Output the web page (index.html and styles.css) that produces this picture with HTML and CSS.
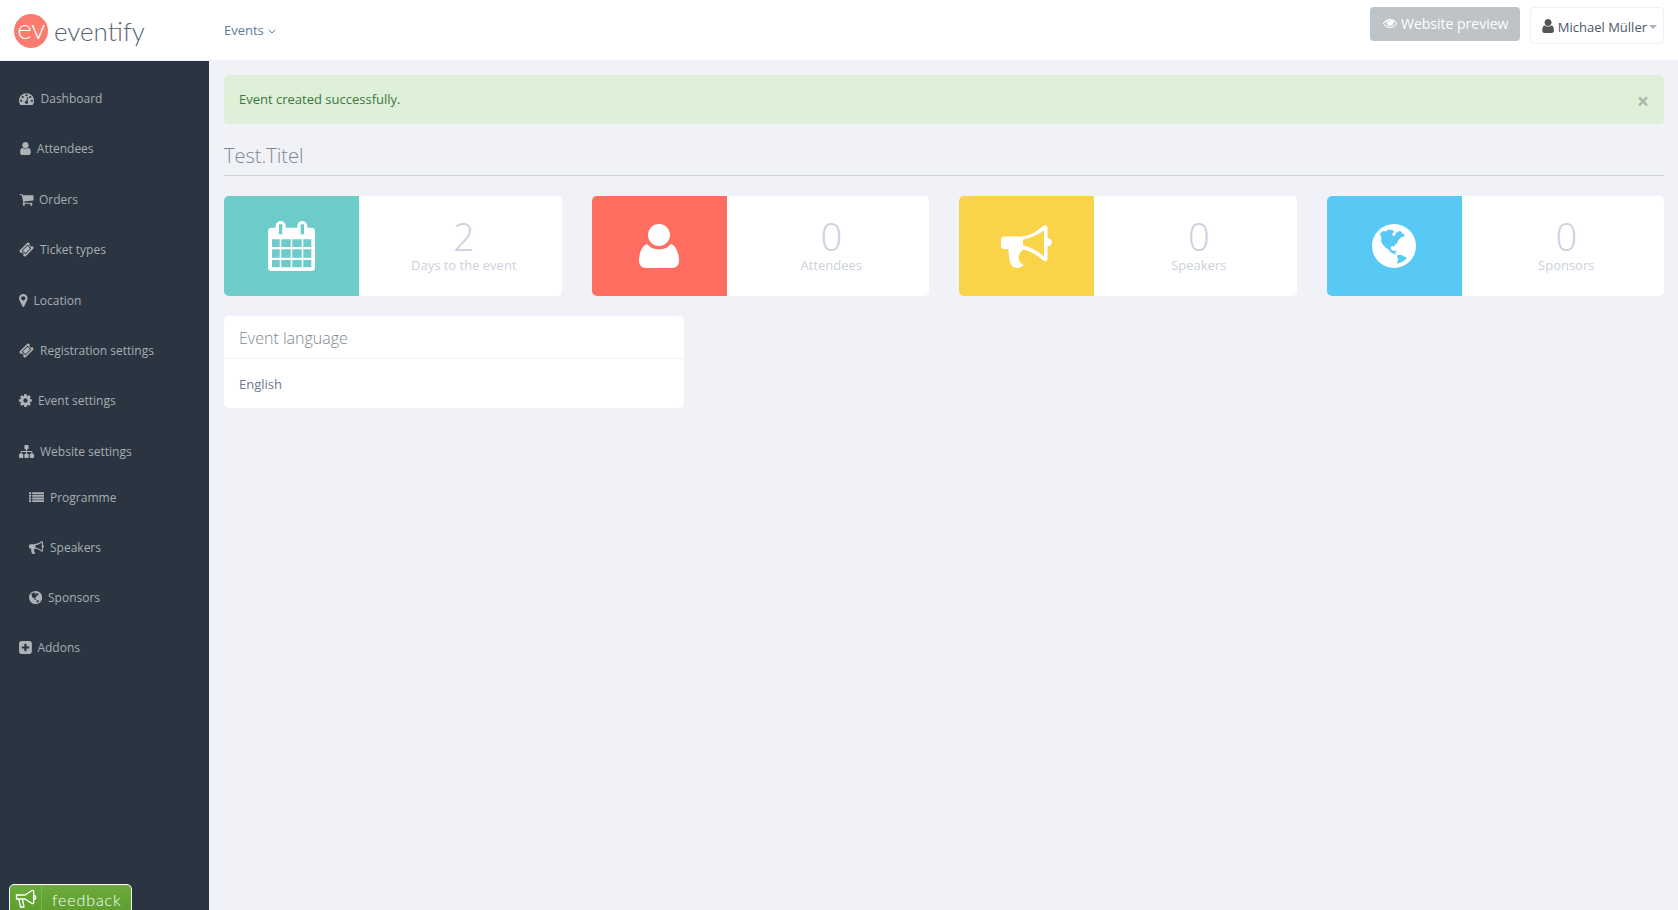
FILE: index.html
```html
<!DOCTYPE html>
<html>
<head>
    <meta charset="utf-8">
    <title>eventify</title>
    <link rel="stylesheet" href="styles.css">
</head>
<body>
<svg class="icon-defs" width="0" height="0">
    <defs>
        <path id="p-dashboard" d="M384 1152q0-53-37.5-90.5t-90.5-37.5-90.5 37.5-37.5 90.5 37.5 90.5 90.5 37.5 90.5-37.5 37.5-90.5zm192-448q0-53-37.5-90.5t-90.5-37.5-90.5 37.5-37.5 90.5 37.5 90.5 90.5 37.5 90.5-37.5 37.5-90.5zm428 481l101-382q6-26-7.5-48.5t-38.5-29.5-48 6.5-30 39.5l-101 382q-60 5-107 43.5t-63 98.5q-20 77 20 146t117 89 146-20 89-117q16-60-6-117t-72-91zm660-33q0-53-37.5-90.5t-90.5-37.5-90.5 37.5-37.5 90.5 37.5 90.5 90.5 37.5 90.5-37.5 37.5-90.5zm-640-640q0-53-37.5-90.5t-90.5-37.5-90.5 37.5-37.5 90.5 37.5 90.5 90.5 37.5 90.5-37.5 37.5-90.5zm448 192q0-53-37.5-90.5t-90.5-37.5-90.5 37.5-37.5 90.5 37.5 90.5 90.5 37.5 90.5-37.5 37.5-90.5zm320 448q0 261-141 483-19 29-54 29h-1402q-35 0-54-29-141-221-141-483 0-182 71-348t191-286 286-191 348-71 348 71 286 191 191 286 71 348z"/>
        <path id="p-user" d="M1536 1399q0 109-62.5 187t-150.5 78h-854q-88 0-150.5-78t-62.5-187q0-85 8.5-160.5t31.5-152 58.5-131 94-89 134.5-34.5q131 128 313 128t313-128q76 0 134.5 34.5t94 89 58.5 131 31.5 152 8.5 160.5zm-256-887q0 159-112.5 271.5t-271.5 112.5-271.5-112.5-112.5-271.5 112.5-271.5 271.5-112.5 271.5 112.5 112.5 271.5z"/>
        <path id="p-cart" d="M704 1536q0 52-38 90t-90 38-90-38-38-90 38-90 90-38 90 38 38 90zm896 0q0 52-38 90t-90 38-90-38-38-90 38-90 90-38 90 38 38 90zm128-1088v512q0 24-16.5 42.5t-40.5 21.5l-1044 122q13 60 13 70 0 16-24 64h920q26 0 45 19t19 45-19 45-45 19h-1024q-26 0-45-19t-19-45q0-11 8-31.5t16-36 21.5-40 15.5-29.5l-177-823h-204q-26 0-45-19t-19-45 19-45 45-19h256q16 0 28.5 6.5t19.5 15.5 13 24.5 8 26 5.5 29.5 4.5 26h1201q26 0 45 19t19 45z"/>
        <path id="p-ticket" d="M1024 452l316 316-572 572-316-316zm-211 979l618-618q19-19 19-45t-19-45l-362-362q-18-18-45-18t-45 18l-618 618q-19 19-19 45t19 45l362 362q18 18 45 18t45-18zm889-637l-907 908q-37 37-90.5 37t-90.5-37l-126-126q56-56 56-136t-56-136-136-56-136 56l-125-126q-37-37-37-90.5t37-90.5l907-906q37-37 90.5-37t90.5 37l125 125q-56 56-56 136t56 136 136 56 136-56l126 125q37 37 37 90.5t-37 90.5z"/>
        <path id="p-marker" d="M1152 640q0-106-75-181t-181-75-181 75-75 181 75 181 181 75 181-75 75-181zm256 0q0 109-33 179l-364 774q-16 33-47.5 52t-67.5 19-67.5-19-46.5-52l-365-774q-33-70-33-179 0-212 150-362t362-150 362 150 150 362z"/>
        <path id="p-cog" d="M1152 896q0-106-75-181t-181-75-181 75-75 181 75 181 181 75 181-75 75-181zm512-109v222q0 12-8 23t-20 13l-185 28q-19 54-39 91 35 50 107 138 10 12 10 25t-9 23q-27 37-99 108t-94 71q-12 0-26-9l-138-108q-44 23-91 38-16 136-29 186-7 28-36 28h-222q-14 0-24.5-8.5t-11.5-21.5l-28-184q-49-16-90-37l-141 107q-10 9-25 9-14 0-25-11-126-114-165-168-7-10-7-23 0-12 8-23 15-21 51-66.5t54-70.5q-27-50-41-99l-183-27q-13-2-21-12.5t-8-23.5v-222q0-12 8-23t19-13l186-28q14-46 39-92-40-57-107-138-10-12-10-24 0-10 9-23 26-36 98.5-107.5t94.5-71.5q13 0 26 10l138 107q44-23 91-38 16-136 29-186 7-28 36-28h222q14 0 24.5 8.5t11.5 21.5l28 184q49 16 90 37l142-107q9-9 24-9 13 0 25 10 129 119 165 170 7 8 7 22 0 12-8 23-15 21-51 66.5t-54 70.5q26 50 41 98l183 28q13 2 21 12.5t8 23.5z"/>
        <path id="p-sitemap" d="M1792 1248v320q0 40-28 68t-68 28h-320q-40 0-68-28t-28-68v-320q0-40 28-68t68-28h96v-192h-512v192h96q40 0 68 28t28 68v320q0 40-28 68t-68 28h-320q-40 0-68-28t-28-68v-320q0-40 28-68t68-28h96v-192h-512v192h96q40 0 68 28t28 68v320q0 40-28 68t-68 28h-320q-40 0-68-28t-28-68v-320q0-40 28-68t68-28h96v-192q0-52 38-90t90-38h512v-192h-96q-40 0-68-28t-28-68v-320q0-40 28-68t68-28h320q40 0 68 28t28 68v320q0 40-28 68t-68 28h-96v192h512q52 0 90 38t38 90v192h96q40 0 68 28t28 68z"/>
        <path id="p-list" d="M0 256h256v224h-256zM384 256h1408v224h-1408zM0 576h256v224h-256zM384 576h1408v224h-1408zM0 896h256v224h-256zM384 896h1408v224h-1408zM0 1216h256v224h-256zM384 1216h1408v224h-1408z"/>
        <path id="p-bullhorn" d="M1664 640q53 0 90.5 37.5t37.5 90.5-37.5 90.5-90.5 37.5v384q0 52-38 90t-90 38q-417-347-812-380-58 19-91 66t-31 100.5 40 92.5q-20 33-23 65.5t6 58 33.5 55 48 50 61.5 50.5q-29 58-111.5 83t-168.5 11.5-132-55.5q-7-23-29.5-87.5t-32-94.5-23-89-15-101 3.5-98.5 22-110.5h-122q-66 0-113-47t-47-113v-192q0-66 47-113t113-47h480q435 0 896-384 52 0 90 38t38 90v384zm-128 604v-954q-394 302-768 343v270q377 42 768 341z"/>
        <path id="p-globe" fill-rule="evenodd" d="M22 0a22 22 0 1 0 0 44a22 22 0 1 0 0-44zM8 9.500l3-2.500 3 .5 2-2 4 .5 2 1-.5 2-1.500 1 1 2 2-.5 1-3 2-.5.5-1 3 .5.500 2 2 .5.500 2.500-3 .5-2 2-1.500 1.500-1 3-1.500.5-1.500 2.500-2-.5-1.500 1.500 1 2.500 2.500 1 2-.5.5 1.500-1.500.5 1 2-2-.5-3-1.500-2.500-3-3.500-2.500-2.500-3-1.500-3 .5-2.500zM25 31.300l4-.5 6 3.200-2.500 2.200-3 2-4.500 1.300.5-2.500 1-1.500-1.500-2.500z"/>
        <path id="p-plus" d="M1344 960v-128q0-26-19-45t-45-19h-256v-256q0-26-19-45t-45-19h-128q-26 0-45 19t-19 45v256h-256q-26 0-45 19t-19 45v128q0 26 19 45t45 19h256v256q0 26 19 45t45 19h128q26 0 45-19t19-45v-256h256q26 0 45-19t19-45zm320-544v960q0 119-84.5 203.5t-203.5 84.5h-960q-119 0-203.5-84.5t-84.5-203.5v-960q0-119 84.5-203.5t203.5-84.5h960q119 0 203.5 84.5t84.5 203.5z"/>
        <path id="p-eye" d="M1664 960q-152-236-381-353 61 104 61 225 0 185-131.5 316.5t-316.5 131.5-316.5-131.5-131.5-316.5q0-121 61-225-229 117-381 353 133 205 333.5 326.5t434.5 121.5 434.5-121.5 333.5-326.5zm-720-384q0-20-14-34t-34-14q-125 0-214.5 89.5t-89.5 214.5q0 20 14 34t34 14 34-14 14-34q0-86 61-147t147-61q20 0 34-14t14-34zm848 384q0 34-20 69-140 230-376.5 368.5t-499.5 138.5-499.5-139-376.5-368q-20-35-20-69t20-69q140-229 376.5-368t499.5-139 499.5 139 376.5 368q20 35 20 69z"/>
    </defs>
</svg>

<header class="topbar">
    <div class="brand">
        <span class="brand-mark">ev</span>
        <span class="brand-name">eventify</span>
    </div>
    <a class="top-link">Events
        <svg class="chevron" viewBox="0 0 8 5"><path d="M.7.8L4 4l3.3-3.2" fill="none" stroke="currentColor" stroke-width="1"/></svg>
    </a>
    <div class="top-actions">
        <a class="btn-preview"><svg class="btn-eye" viewBox="0 256 1792 1280"><use href="#p-eye"/></svg> Website preview</a>
        <a class="btn-user"><svg class="btn-person" viewBox="128 128 1408 1536"><use href="#p-user"/></svg> Michael Müller<span class="caret"></span></a>
    </div>
</header>

<div class="layout">
    <aside class="sidebar">
        <ul class="nav">
            <li><svg class="i i-dashboard" viewBox="0 0 1792 1792"><use href="#p-dashboard"/></svg>Dashboard</li>
            <li><svg class="i i-user" viewBox="128 0 1408 1792"><use href="#p-user"/></svg>Attendees</li>
            <li><svg class="i i-cart" viewBox="0 0 1728 1792"><use href="#p-cart"/></svg>Orders</li>
            <li><svg class="i i-ticket" viewBox="0 0 1792 1792"><use href="#p-ticket"/></svg>Ticket types</li>
            <li><svg class="i i-marker" viewBox="384 0 1024 1792"><use href="#p-marker"/></svg>Location</li>
            <li><svg class="i i-ticket" viewBox="0 0 1792 1792"><use href="#p-ticket"/></svg>Registration settings</li>
            <li><svg class="i i-cog" viewBox="128 0 1536 1792"><use href="#p-cog"/></svg>Event settings</li>
            <li><svg class="i i-sitemap" viewBox="0 0 1792 1792"><use href="#p-sitemap"/></svg>Website settings</li>
        </ul>
        <ul class="nav nav-sub">
            <li><svg class="i i-list" viewBox="0 0 1792 1792"><use href="#p-list"/></svg>Programme</li>
            <li><svg class="i i-bullhorn" viewBox="0 0 1792 1792"><use href="#p-bullhorn"/></svg>Speakers</li>
            <li><svg class="i i-globe" viewBox="0 -3 44 50"><use href="#p-globe"/></svg>Sponsors</li>
        </ul>
        <ul class="nav">
            <li><svg class="i i-plus" viewBox="128 0 1536 1792"><use href="#p-plus"/></svg>Addons</li>
        </ul>
        <a class="feedback">
            <span class="feedback-icon">
                <svg viewBox="0 0 22 20"><path d="M1.500 6h8.500l7-4.500c1-.5 1.700 0 1.700 1v11c0 1-.7 1.500-1.700 1l-7-4.500h-8.500zM4 10.500l1.500 7.500h3.500l-1.500-7.500M18.700 6.500c1.500 0 2 1 2 2s-.5 2-2 2" fill="none" stroke="#fff" stroke-width="1.300" stroke-linejoin="round"/></svg>
            </span>
            <span class="feedback-text">feedback</span>
        </a>
    </aside>

    <main class="content">
        <div class="alert">
            <span class="alert-text">Event created successfully.</span>
            <span class="alert-close">×</span>
        </div>

        <h2 class="page-title">Test.Titel</h2>

        <div class="stats">
            <div class="stat">
                <div class="stat-icon bg-teal">
                    <svg width="47" height="50" viewBox="0 0 47 50"><path fill="#fff" fill-rule="evenodd" d="M7.700 6.700v-1.700a5 5 0 0 1 10 0v1.700h11.600v-1.700a5 5 0 0 1 10 0v1.700h4a3.700 3.700 0 0 1 3.700 3.700v36a3.600 3.600 0 0 1-3.600 3.600h-39.800a3.600 3.600 0 0 1-3.600-3.600v-36a3.700 3.700 0 0 1 3.700-3.700zM11 3.300v10h3.300v-10zM32.700 3.300v10h3.300v-10zM4 18.300v7.700h7.700v-7.700zM13.300 18.300v7.700h9.400v-7.700zM24.300 18.300v7.700h9.400v-7.700zM35.300 18.300v7.700h8v-7.700zM4 28.300v8.400h7.700v-8.400zM13.300 28.300v8.400h9.400v-8.400zM24.300 28.300v8.400h9.400v-8.400zM35.300 28.300v8.400h8v-8.400zM4 39v7.300h7.700v-7.300zM13.300 39v7.300h9.400v-7.300zM24.300 39v7.300h9.400v-7.300zM35.300 39v7.300h8v-7.300z"/></svg>
                </div>
                <div class="stat-body"><span class="stat-num">2</span><span class="stat-label">Days to the event</span></div>
            </div>
            <div class="stat">
                <div class="stat-icon bg-red">
                    <svg width="40" height="44" viewBox="0 0 40 44"><circle cx="20" cy="11" r="11" fill="#fff"/><path fill="#fff" d="M8.500 20C10.500 23.500 15 25.300 20 25.300S29.500 23.500 31.500 20C36 20.500 40 28 40 36.500C40 41 37.500 44 33 44H7C2.500 44 0 41 0 36.500C0 28 4 20.500 8.500 20z"/></svg>
                </div>
                <div class="stat-body"><span class="stat-num">0</span><span class="stat-label">Attendees</span></div>
            </div>
            <div class="stat">
                <div class="stat-icon bg-yellow">
                    <svg width="51" height="43" viewBox="0 0 51 43"><path fill="#fff" fill-rule="evenodd" d="M3 11.500H21C29 10.500 36 6.500 42 1C44 -.5 46.500 .5 46.500 3V13.200C49 13 51 15 51 17.200S49 21.500 46.500 21.300V33.500C46.500 36 44 37 42 35.300C36 30.500 29.500 25.800 22.500 24.500C20 26.500 17.500 29 17.500 32.500C17.500 36 19.500 38.500 22.500 39.500C21 43 15 44 11.500 41.500C8.500 38 7.500 31 7.500 24H3C1 24 0 22.500 0 21V14.500C0 12.800 1 11.500 3 11.500zM22 14.500V20.500C29 21.500 36 25.500 43 31.500V5.500C36 10 29 13.500 22 14.500z"/></svg>
                </div>
                <div class="stat-body"><span class="stat-num">0</span><span class="stat-label">Speakers</span></div>
            </div>
            <div class="stat">
                <div class="stat-icon bg-blue">
                    <svg width="44" height="44" viewBox="0 0 44 44" fill="#fff"><use href="#p-globe"/></svg>
                </div>
                <div class="stat-body"><span class="stat-num">0</span><span class="stat-label">Sponsors</span></div>
            </div>
        </div>

        <section class="panel">
            <h3 class="panel-head">Event language</h3>
            <div class="panel-body">English</div>
        </section>
    </main>
</div>
</body>
</html>
```

FILE: styles.css
```css
* {
    box-sizing: border-box;
}

html, body {
    height: 100%;
    overflow: hidden;
}

body {
    margin: 0;
    font-family: "Open Sans", sans-serif;
    font-size: 13px;
    color: #6b7a90;
    background-color: #f0f2f7;
}

.icon-defs {
    position: absolute;
}

/* top bar */
.topbar {
    display: flex;
    align-items: center;
    height: 61px;
    background-color: #fff;
    border-bottom: 1px solid #f0f2f7;
}

.brand {
    display: flex;
    align-items: center;
    width: 224px;
    padding-left: 14px;
    padding-top: 2px;
}

.brand-mark {
    display: block;
    width: 34px;
    height: 34px;
    border-radius: 50%;
    background-color: #fb7c6f;
    color: #fff;
    font-family: "Lato", sans-serif;
    font-weight: 300;
    font-size: 28px;
    line-height: 29px;
    text-align: center;
    letter-spacing: -.5px;
}

.brand-name {
    margin-left: 6px;
    font-family: "Lato", sans-serif;
    font-weight: 300;
    font-size: 26px;
    line-height: 34px;
    color: #56647a;
}

.top-link {
    color: #5c7aa0;
    font-size: 13px;
}

.chevron {
    width: 8px;
    height: 5px;
    margin-left: 1px;
    vertical-align: 1px;
}

.top-actions {
    display: flex;
    align-items: flex-start;
    align-self: flex-start;
    margin-left: auto;
    padding-top: 7px;
    padding-right: 14px;
}

.btn-preview {
    display: flex;
    align-items: center;
    height: 34px;
    padding: 0 12px 2px 13px;
    border-radius: 4px;
    background-color: #bdc3c7;
    color: #fff;
    font-size: 14px;
    white-space: pre;
}

.btn-eye {
    width: 14px;
    height: 10px;
    fill: #fff;
}

.btn-user {
    display: flex;
    align-items: center;
    height: 37px;
    margin-left: 10px;
    padding: 2px 6px 0 10px;
    border: 1px solid #eff0f5;
    border-radius: 4px;
    background-color: #fff;
    color: #4b5668;
    font-size: 13px;
    white-space: pre;
}

.btn-person {
    width: 13px;
    height: 14px;
    margin-top: -2px;
    fill: #555;
}

.caret {
    width: 0;
    height: 0;
    margin-left: 2px;
    border-top: 4px solid #a9afbd;
    border-left: 4px solid transparent;
    border-right: 4px solid transparent;
}

/* sidebar */
.layout {
    display: flex;
    height: 849px;
}

.sidebar {
    position: relative;
    flex: 0 0 209px;
    padding-top: 12.300px;
    overflow: hidden;
    background-color: #2a3541;
}

.nav {
    margin: 0;
    padding: 0 0 0 19px;
    list-style: none;
    font-size: 12px;
    color: #a8adb3;
}

.nav li {
    display: flex;
    align-items: center;
    height: 50.4px;
}

.nav-sub {
    margin-top: -4.400px;
    padding-left: 29px;
}

.nav-sub li {
    height: 50px;
}

.i {
    flex: none;
    height: 15px;
    fill: #aeb2b6;
}

.i-dashboard { width: 15px; margin-right: 6.500px; }
.i-user { width: 11.800px; margin-right: 6px; }
.i-cart { width: 14.500px; margin-right: 5.500px; }
.i-ticket { width: 15px; margin-right: 6px; }
.i-marker { width: 8.600px; margin-right: 6px; }
.i-cog { width: 12.900px; margin-right: 6px; }
.i-sitemap { width: 15px; margin-right: 6px; }
.i-list { width: 15px; margin-right: 6px; }
.i-bullhorn { width: 15px; margin-right: 6px; }
.i-globe { width: 13.200px; margin-right: 5.800px; }
.i-plus { width: 12.900px; margin-right: 5.500px; }

.feedback {
    position: absolute;
    left: 9px;
    bottom: -6px;
    display: flex;
    width: 123px;
    height: 32px;
    border: 1px solid #fff;
    border-radius: 5px 5px 0 0;
    background: linear-gradient(#6cab3b, #5c9d2f);
    color: #fff;
}

.feedback-icon {
    flex: 0 0 32px;
    padding: 4px 0 0 5px;
    border-right: 1px solid #7eb655;
}

.feedback-icon svg {
    display: block;
    width: 22px;
    height: 20px;
}

.feedback-text {
    padding: 5px 0 0 10px;
    font-family: "Lato", sans-serif;
    font-weight: 300;
    font-size: 16px;
    line-height: 20px;
    letter-spacing: .9px;
}

/* content */
.content {
    flex: 1;
    padding: 14px 14px 0 15px;
}

.alert {
    display: flex;
    justify-content: space-between;
    align-items: center;
    height: 49px;
    padding: 0 15px;
    border-radius: 5px;
    background-color: #dff0d8;
    color: #3c763d;
}

.alert-text {
    margin-bottom: 2px;
}

.alert-close {
    margin-top: 3px;
    color: #a9b8a9;
    font-size: 21px;
    font-weight: 700;
    line-height: 20px;
}

.page-title {
    margin: 18px 0 20px;
    padding-bottom: 6px;
    border-bottom: 1px solid #cdd0d6;
    color: #7d8791;
    font-size: 20px;
    font-weight: 300;
    line-height: 27px;
}

.stats {
    display: grid;
    grid-template-columns: repeat(4, 1fr);
    gap: 30px;
}

.stat {
    display: flex;
    height: 100px;
    border-radius: 5px;
    overflow: hidden;
    background-color: #fff;
}

.stat-icon {
    display: flex;
    flex: 0 0 135px;
    align-items: center;
    justify-content: center;
}

.bg-teal { background-color: #6dcbc9; }
.bg-red { background-color: #ff6d60; }
.bg-yellow { background-color: #f9d448; }
.bg-blue { background-color: #58c8f5; }

.stat-body {
    display: flex;
    flex: 1;
    flex-direction: column;
    align-items: center;
    justify-content: center;
    padding: 0 0 1px 7px;
    color: #cbd0e0;
}

.stat-num {
    font-size: 38px;
    font-weight: 300;
    line-height: 38px;
}

.stat-label {
    font-size: 13px;
    line-height: 20px;
}

.panel {
    width: 460px;
    height: 92px;
    margin-top: 20px;
    border-radius: 5px;
    background-color: #fff;
}

.panel-head {
    margin: 0;
    height: 43px;
    padding: 0 15px;
    border-bottom: 1px solid #f0f2f7;
    color: #7d8791;
    font-size: 16px;
    font-weight: 300;
    line-height: 44px;
}

.panel-body {
    padding: 15px 15px;
    color: #6b7a90;
    line-height: 20px;
}
```
